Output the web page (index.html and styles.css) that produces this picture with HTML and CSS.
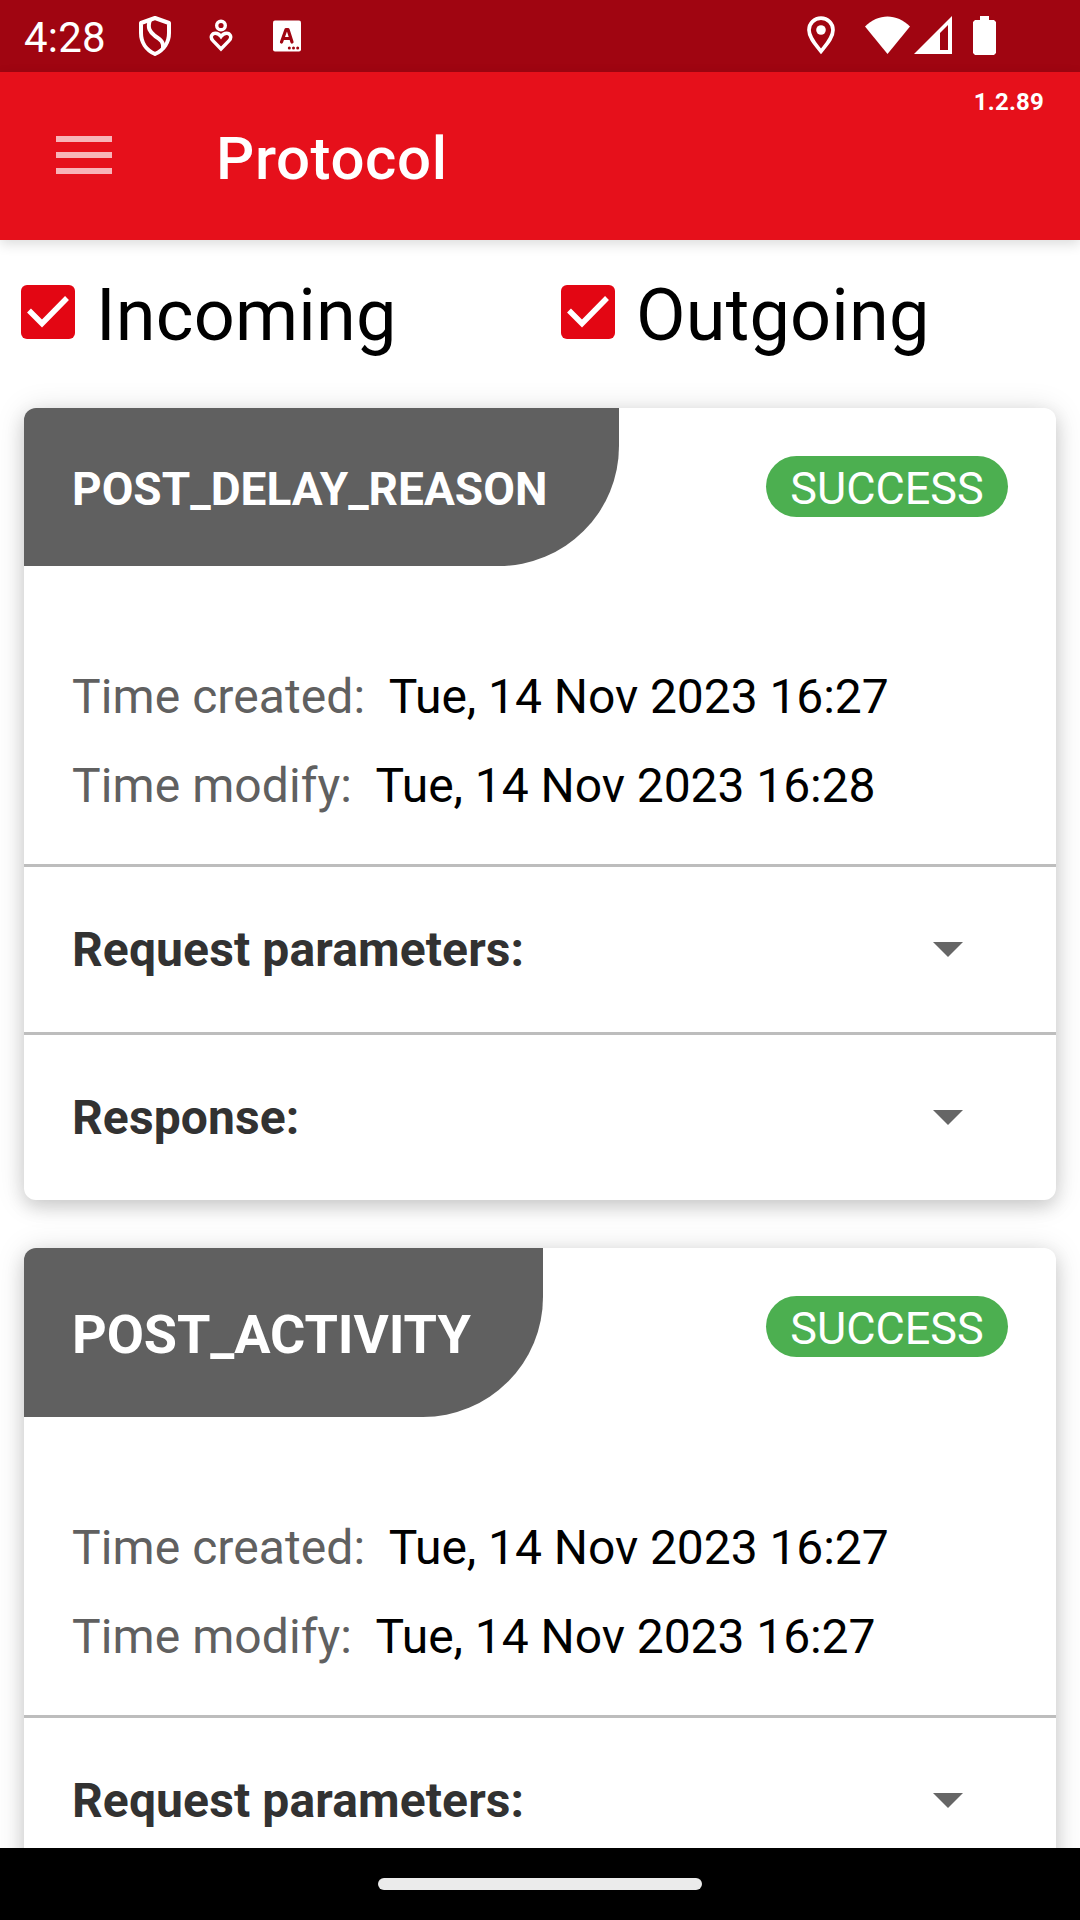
FILE: index.html
```html
<!DOCTYPE html>
<html lang="en">
<head>
<meta charset="utf-8">
<title>Protocol</title>
<link rel="stylesheet" href="styles.css">
</head>
<body>
<div class="screen">
  <div class="status-bar">
    <span class="clock">4:28</span>
    <svg class="icon-shield" width="36" height="42" viewBox="0 0 36 42" fill="none" stroke="#fff" stroke-width="4" stroke-linejoin="round"><path d="M18 3L32 8V18C32 27 27 35 18 39C9 35 4 27 4 18V8Z"/><path d="M13 5C10 13 13 17 18 21C24 25 27 27 26 34" stroke-width="4"/></svg>
    <svg class="icon-care" width="24" height="34" viewBox="0 0 24 34" fill="none" stroke="#fff" stroke-width="3.4"><circle cx="12" cy="6.5" r="4.3"/><path d="M12 30L3.9 21.6C0.5 18 3 14.2 6.5 14.2C9.5 14.2 10.6 15.6 12 17.6C13.4 15.6 14.5 14.2 17.5 14.2C21 14.2 23.5 18 20.1 21.6Z"/></svg>
    <svg class="icon-keyboard" width="28" height="32" viewBox="0 0 28 32"><rect y=".5" width="28" height="31" rx="2" fill="#fff"/><path d="M8.5 22L13 9.500H15L19 22M10 18.500H18" fill="none" stroke="#a00511" stroke-width="3.200" stroke-linecap="round" stroke-linejoin="round"/><g fill="#a00511"><circle cx="16.300" cy="28" r="1.500"/><circle cx="20.500" cy="28" r="1.500"/><circle cx="24.700" cy="28" r="1.500"/></g></svg>
    <svg class="icon-pin" width="28" height="39" viewBox="0 0 28 39"><path d="M14 2.200C7.300 2.200 2 7.200 2 14C2 22 9 29 14 35.300C19 29 26 22 26 14C26 7.200 20.700 2.200 14 2.200Z" fill="none" stroke="#fff" stroke-width="3.700"/><circle cx="14" cy="14" r="4.800" fill="#fff"/></svg>
    <svg class="icon-wifi" width="45" height="38" viewBox="0 0 45 38"><path d="M0 10.500C13 -3 32 -3 45 10.500L22.500 38Z" fill="#fff"/></svg>
    <svg class="icon-signal" width="38" height="38" viewBox="0 0 38 38"><path fill="#fff" fill-rule="evenodd" d="M0 38L38 0V38ZM26 17V34H34V9Z"/></svg>
    <svg class="icon-battery" width="23" height="39" viewBox="0 0 23 39"><path fill="#fff" d="M7 0H16V4H21L23 6V37L21 39H2L0 37V6L2 4H7Z"/></svg>
  </div>
  <header class="app-bar">
    <svg class="menu" width="56" height="38" viewBox="0 0 56 38"><path d="M0 0H56V6H0ZM0 16H56V22H0ZM0 32H56V38H0Z" fill="#f8b4b8"/></svg>
    <h1 class="app-title">Protocol</h1>
    <span class="version">1.2.89</span>
  </header>
  <main class="content">
    <div class="filters">
      <label class="filter"><svg class="check" width="54" height="54" viewBox="0 0 54 54"><rect width="54" height="54" rx="6" fill="#e30613"/><path d="M8 25.500L21 38.500L46 13" fill="none" stroke="#fff" stroke-width="5.500"/></svg><span class="filter-label">Incoming</span></label>
      <label class="filter"><svg class="check" width="54" height="54" viewBox="0 0 54 54"><rect width="54" height="54" rx="6" fill="#e30613"/><path d="M8 25.500L21 38.500L46 13" fill="none" stroke="#fff" stroke-width="5.500"/></svg><span class="filter-label">Outgoing</span></label>
    </div>
    <section class="card">
      <div class="card-head"><h2 class="tag tag-small">POST_DELAY_REASON</h2><span class="badge">SUCCESS</span></div>
      <div class="times">
        <p class="time"><span class="time-label">Time created:</span><span class="time-value">Tue, 14 Nov 2023 16:27</span></p>
        <p class="time"><span class="time-label">Time modify:</span><span class="time-value">Tue, 14 Nov 2023 16:28</span></p>
      </div>
      <div class="expander"><span>Request parameters:</span><svg width="30" height="15" viewBox="0 0 30 15"><path d="M0 0H30L15 15Z" fill="#666"/></svg></div>
      <div class="expander"><span>Response:</span><svg width="30" height="15" viewBox="0 0 30 15"><path d="M0 0H30L15 15Z" fill="#666"/></svg></div>
    </section>
    <section class="card">
      <div class="card-head"><h2 class="tag">POST_ACTIVITY</h2><span class="badge">SUCCESS</span></div>
      <div class="times">
        <p class="time"><span class="time-label">Time created:</span><span class="time-value">Tue, 14 Nov 2023 16:27</span></p>
        <p class="time"><span class="time-label">Time modify:</span><span class="time-value">Tue, 14 Nov 2023 16:27</span></p>
      </div>
      <div class="expander"><span>Request parameters:</span><svg width="30" height="15" viewBox="0 0 30 15"><path d="M0 0H30L15 15Z" fill="#666"/></svg></div>
    </section>
  </main>
  <div class="nav-bar"><div class="home-pill"></div></div>
</div>
</body>
</html>
```
FILE: styles.css
```css
* { box-sizing: border-box; }
body { margin: 0; font-family: Roboto, "Liberation Sans", sans-serif; background: #fff; color: #000; }
h1, h2, p { margin: 0; }
svg { display: block; flex: none; }

.screen { display: flex; flex-direction: column; width: 1080px; height: 1920px; overflow: hidden; }

.status-bar { flex: none; display: flex; align-items: flex-start; height: 72px; padding-left: 24px; background: #a00511; color: #fff; }
.clock { width: 113px; padding-top: 13px; font-size: 42px; line-height: 50px; letter-spacing: .2px; }
.icon-shield { margin-top: 15px; }
.icon-care { margin: 19px 0 0 36px; }
.icon-keyboard { margin: 20px 0 0 40px; }
.icon-pin { margin: 16px 0 0 506px; }
.icon-wifi { margin: 16px 0 0 30px; }
.icon-signal { margin: 16px 0 0 4px; }
.icon-battery { margin: 16px 0 0 21px; }

.app-bar { position: relative; z-index: 1; flex: none; display: flex; align-items: flex-start; height: 168px; padding-left: 56px; background: #e6101b; color: #fff; box-shadow: 0 4px 12px rgba(0, 0, 0, .14); }
.menu { margin-top: 64px; }
.app-title { flex: 1; margin: 52px 0 0 104px; font-size: 60px; line-height: 70px; font-weight: 500; letter-spacing: .6px; }
.version { margin: 16px 36px 0 0; font-size: 24px; line-height: 28px; font-weight: 700; letter-spacing: .2px; }

.content { flex: 1; min-height: 0; overflow: hidden; }
.filters { display: grid; grid-template-columns: 1fr 1fr; height: 168px; padding-top: 33px; }
.filter { display: flex; align-items: flex-start; padding-left: 21px; }
.check { margin-top: 12px; }
.filter-label { margin: 1px 0 0 21px; font-size: 72px; line-height: 84px; letter-spacing: .2px; }

.card { margin: 0 24px 48px; border-radius: 12px; overflow: hidden; background: #fff; box-shadow: 0 7px 18px rgba(0, 0, 0, .14), 0 2px 30px rgba(0, 0, 0, .13); }
.card-head { display: flex; align-items: flex-start; justify-content: space-between; padding-right: 48px; }
.tag { height: 169px; padding: 49px 72px 0 48px; border-bottom-right-radius: 120px; background: #606060; color: #fff; font-size: 54px; line-height: 76px; font-weight: 700; letter-spacing: -.1px; }
.tag-small { height: 158px; padding-top: 48px; font-size: 46px; line-height: 66px; letter-spacing: 0; }
.badge { width: 242px; height: 61px; margin-top: 48px; border-radius: 31px; background: #4caf50; color: #fff; font-size: 45px; line-height: 65px; text-align: center; }

.times { height: 298px; padding: 86px 48px 0; }
.time { display: flex; gap: 23.5px; height: 89px; font-size: 48px; line-height: 89px; white-space: nowrap; }
.time-label { color: #606060; letter-spacing: .08px; }
.time-value { letter-spacing: -.06px; }
.expander { display: flex; align-items: center; justify-content: space-between; height: 168px; padding: 0 93px 0 48px; border-top: 3px solid #bdbdbd; color: #323232; font-size: 48px; font-weight: 700; letter-spacing: .12px; }

.nav-bar { flex: none; display: flex; align-items: center; justify-content: center; height: 72px; background: #000; }
.home-pill { width: 324px; height: 12px; border-radius: 6px; background: #ebebeb; }
```
